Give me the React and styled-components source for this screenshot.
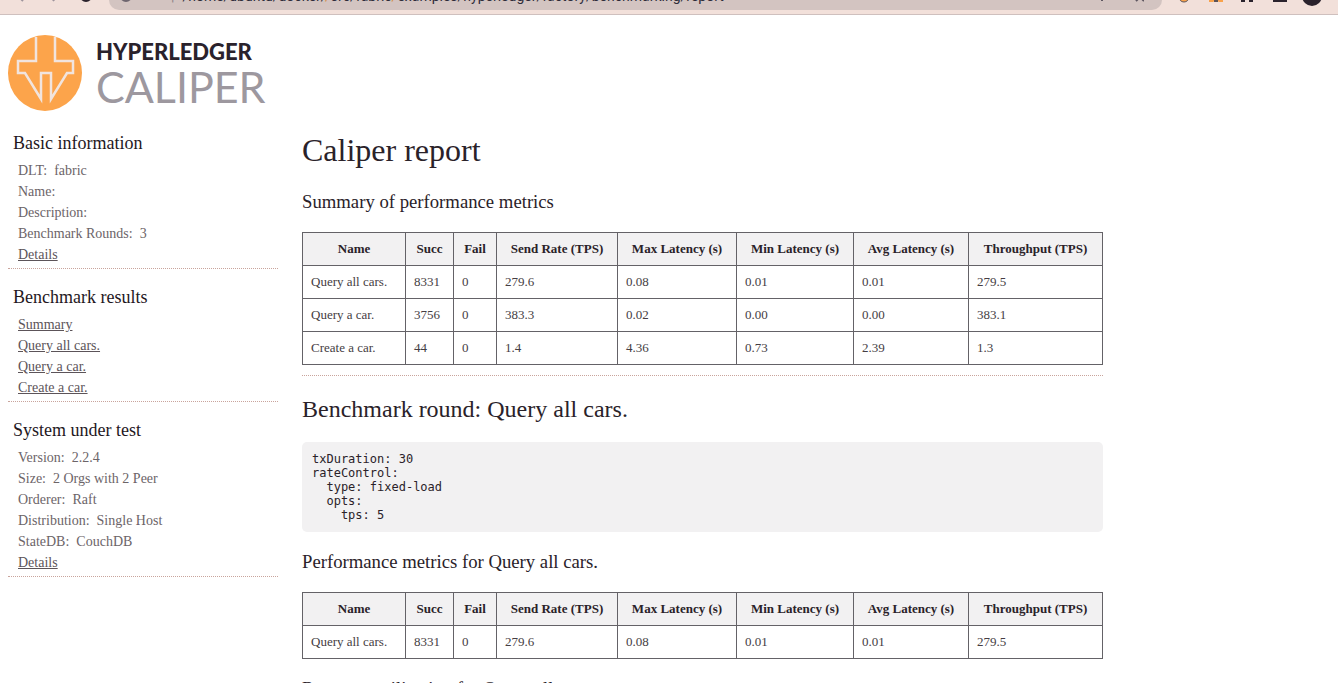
import React from "react";
import styled, { createGlobalStyle } from "styled-components";

const GlobalStyle = createGlobalStyle`
  * { box-sizing: border-box; }
  body {
    margin: 0;
    background: #fff;
    color: #2a2229;
    font-family: "Liberation Serif", serif;
    overflow: hidden;
  }
`;

const Page = styled.div`
  height: 100vh;
  overflow: hidden;
`;

const Chrome = styled.div`
  display: grid;
  grid-template-columns: 109px minmax(0, 1fr) 176px;
  align-items: start;
  height: 15px;
  background: #f2e0da;
  border-bottom: 1px solid #cfc0be;
`;

const ChromeIcons = styled.svg`
  display: block;
  width: 100%;
  height: 14px;
`;

const Address = styled.div`
  display: flex;
  align-items: flex-end;
  gap: 8px;
  height: 10px;
  padding: 0 18px 7px 10px;
  border-radius: 0 0 14px 14px;
  background: #d3c4c1;
  color: #2e2c39;
  font: 14px/14px Roboto, sans-serif;
  white-space: nowrap;
`;

const AddressIcon = styled.svg`
  flex: none;
  display: block;
  width: ${(p) => p.$w}px;
  height: 3px;
`;

const Divide = styled.span`
  margin-left: 30px;
  color: #8d8286;
`;

const Url = styled.span`
  flex: 1;
`;

const Orange = styled.span`
  color: #d58a3c;
`;

const Brand = styled.header`
  display: flex;
  align-items: center;
  gap: 13px;
  padding: 20px 8px 0;
`;

const Mark = styled.svg`
  display: block;
  width: 75px;
  height: 77px;
`;

const BrandText = styled.div`
  display: flex;
  flex-direction: column;
  font-family: Lato, sans-serif;
`;

const BrandTop = styled.span`
  font-size: 22px;
  line-height: 26px;
  font-weight: 900;
  color: #2a222c;
`;

const BrandBottom = styled.span`
  font-size: 43px;
  line-height: 44px;
  color: #9d989f;
`;

const Columns = styled.div`
  display: grid;
  grid-template-columns: 270px minmax(0, 801px);
  gap: 24px;
  padding: 0 8px;
`;

const Sidebar = styled.aside`
  padding-top: 21px;
`;

const Group = styled.section`
  margin-bottom: 18px;
  padding-bottom: 3px;
  border-bottom: 1px dotted #c9a49c;
`;

const GroupTitle = styled.h2`
  margin: 0 0 6px 5px;
  font-size: 18px;
  line-height: 21px;
  font-weight: 400;
  color: #1f181e;
`;

const List = styled.ul`
  margin: 0;
  padding: 0 0 0 10px;
  list-style: none;
`;

const Item = styled.li`
  font-size: 14px;
  line-height: 21px;
  color: #6c6468;
`;

const ItemLink = styled.a`
  color: #5c5459;
`;

const Value = styled.span`
  margin-left: 7px;
`;

const Main = styled.main`
  min-width: 0;
  padding-top: 20px;
`;

const Title = styled.h1`
  margin: 0 0 23px;
  font-size: 32px;
  line-height: 36px;
  font-weight: 400;
`;

const RoundTitle = styled.h2`
  margin: 20px 0 19px;
  font-size: 24px;
  line-height: 27px;
  font-weight: 400;
`;

const SectionTitle = styled.h3`
  margin: 19px 0 20px;
  line-height: 21px;
  font-weight: 400;
`;

const Table = styled.table`
  width: 100%;
  table-layout: fixed;
  border-collapse: collapse;
  font-size: 13px;
  line-height: 16px;
`;

const Col = styled.col`
  width: ${(p) => p.$w}px;
`;

const Th = styled.th`
  padding: 8px;
  border: 1px solid #646267;
  background: #f2f1f2;
  font-weight: 700;
  text-align: center;
  white-space: nowrap;
`;

const Td = styled.td`
  padding: 8px;
  border: 1px solid #646267;
  color: #453d43;
`;

const Divider = styled.hr`
  margin: 10px 0 0;
  border: 0;
  border-top: 1px dotted #c9a49c;
`;

const Config = styled.pre`
  margin: 0;
  padding: 10px;
  border-radius: 5px;
  background: #f2f1f2;
  font: 12px/14px "DejaVu Sans Mono", monospace;
`;

const groups = [
  {
    title: "Basic information",
    items: [
      { label: "DLT:", value: "fabric" },
      { label: "Name:" },
      { label: "Description:" },
      { label: "Benchmark Rounds:", value: "3" },
      { label: "Details", href: "#benchmark-details" },
    ],
  },
  {
    title: "Benchmark results",
    items: [
      { label: "Summary", href: "#summary" },
      { label: "Query all cars.", href: "#query-all" },
      { label: "Query a car.", href: "#query-one" },
      { label: "Create a car.", href: "#create" },
    ],
  },
  {
    title: "System under test",
    items: [
      { label: "Version:", value: "2.2.4" },
      { label: "Size:", value: "2 Orgs with 2 Peer" },
      { label: "Orderer:", value: "Raft" },
      { label: "Distribution:", value: "Single Host" },
      { label: "StateDB:", value: "CouchDB" },
      { label: "Details", href: "#sut-details" },
    ],
  },
];

const columns = [
  ["Name", 103],
  ["Succ", 48],
  ["Fail", 43],
  ["Send Rate (TPS)", 121],
  ["Max Latency (s)", 119],
  ["Min Latency (s)", 117],
  ["Avg Latency (s)", 115],
  ["Throughput (TPS)", 134],
];

const results = [
  ["Query all cars.", "8331", "0", "279.6", "0.08", "0.01", "0.01", "279.5"],
  ["Query a car.", "3756", "0", "383.3", "0.02", "0.00", "0.00", "383.1"],
  ["Create a car.", "44", "0", "1.4", "4.36", "0.73", "2.39", "1.3"],
];

const config = `txDuration: 30
rateControl:
  type: fixed-load
  opts:
    tps: 5`;

function Metrics({ rows }) {
  return (
    <Table>
      <colgroup>
        {columns.map(([name, w]) => (
          <Col key={name} $w={w} />
        ))}
      </colgroup>
      <thead>
        <tr>
          {columns.map(([name]) => (
            <Th key={name} scope="col">{name}</Th>
          ))}
        </tr>
      </thead>
      <tbody>
        {rows.map((row) => (
          <tr key={row[0]}>
            {row.map((cell, i) => (
              <Td key={i}>{cell}</Td>
            ))}
          </tr>
        ))}
      </tbody>
    </Table>
  );
}

export default function App() {
  return (
    <Page>
      <GlobalStyle />
      <Chrome>
        <ChromeIcons viewBox="0 0 109 14" preserveAspectRatio="xMinYMin" aria-hidden="true">
          <path d="M19 -3l4 4M56 -3l-3 4" stroke="#9d949c" strokeWidth="2" fill="none" />
          <circle cx="86" cy="-4" r="5" stroke="#2a222c" strokeWidth="2" fill="none" />
        </ChromeIcons>
        <Address>
          <AddressIcon $w={14} viewBox="0 0 14 3" aria-hidden="true">
            <circle cx="7" cy="-4" r="5" fill="none" stroke="#6e666f" strokeWidth="2" />
          </AddressIcon>
          <Divide>|</Divide>
          <Url>
            /home/ubuntu/docker/<Orange>/</Orange>src/fabric<Orange>/</Orange>
            examples/hyperledger/factory/benchmarking/report
          </Url>
          <AddressIcon $w={48} viewBox="0 0 48 3" aria-hidden="true">
            <path d="M6 0v1M40 1l3-3M48 1l-3-3" stroke="#5d5660" strokeWidth="2" fill="none" />
          </AddressIcon>
        </Address>
        <ChromeIcons viewBox="0 0 176 14" preserveAspectRatio="xMinYMin" aria-hidden="true">
          <circle cx="22" cy="-3" r="5" fill="#f9a24b" stroke="#5d5357" />
          <path d="M47 -1h14v3h-4l-3-2-3 2h-4z" fill="#f9a24b" />
          <path d="M52 0h4v2h-4z" fill="#5d5357" />
          <path d="M79 0h4v2h-4zM87 0h4v2h-4zM111 -1h14v3h-14z" fill="#2a222c" />
          <circle cx="150" cy="-4" r="10" fill="#2a222c" />
        </ChromeIcons>
      </Chrome>

      <Brand>
        <Mark viewBox="0 0 75 77" role="img" aria-label="Caliper">
          <ellipse cx="37" cy="38" rx="37" ry="38" fill="#fca44b" />
          <path
            d="M28 2V26H10V38H17L33 64V38H43V64L59 38H65V26H47V2"
            fill="none"
            stroke="#f1e4de"
            strokeWidth="2.5"
          />
        </Mark>
        <BrandText>
          <BrandTop>HYPERLEDGER</BrandTop>
          <BrandBottom>CALIPER</BrandBottom>
        </BrandText>
      </Brand>

      <Columns>
        <Sidebar>
          {groups.map((g) => (
            <Group key={g.title}>
              <GroupTitle>{g.title}</GroupTitle>
              <List>
                {g.items.map((it) => (
                  <Item key={it.label}>
                    {it.href ? <ItemLink href={it.href}>{it.label}</ItemLink> : it.label}
                    {it.value && <Value>{it.value}</Value>}
                  </Item>
                ))}
              </List>
            </Group>
          ))}
        </Sidebar>

        <Main>
          <Title>Caliper report</Title>
          <SectionTitle id="summary">Summary of performance metrics</SectionTitle>
          <Metrics rows={results} />
          <Divider />
          <RoundTitle id="query-all">Benchmark round: Query all cars.</RoundTitle>
          <Config>{config}</Config>
          <SectionTitle>Performance metrics for Query all cars.</SectionTitle>
          <Metrics rows={results.slice(0, 1)} />
          <SectionTitle>Resource utilization for Query all cars.</SectionTitle>
        </Main>
      </Columns>
    </Page>
  );
}
